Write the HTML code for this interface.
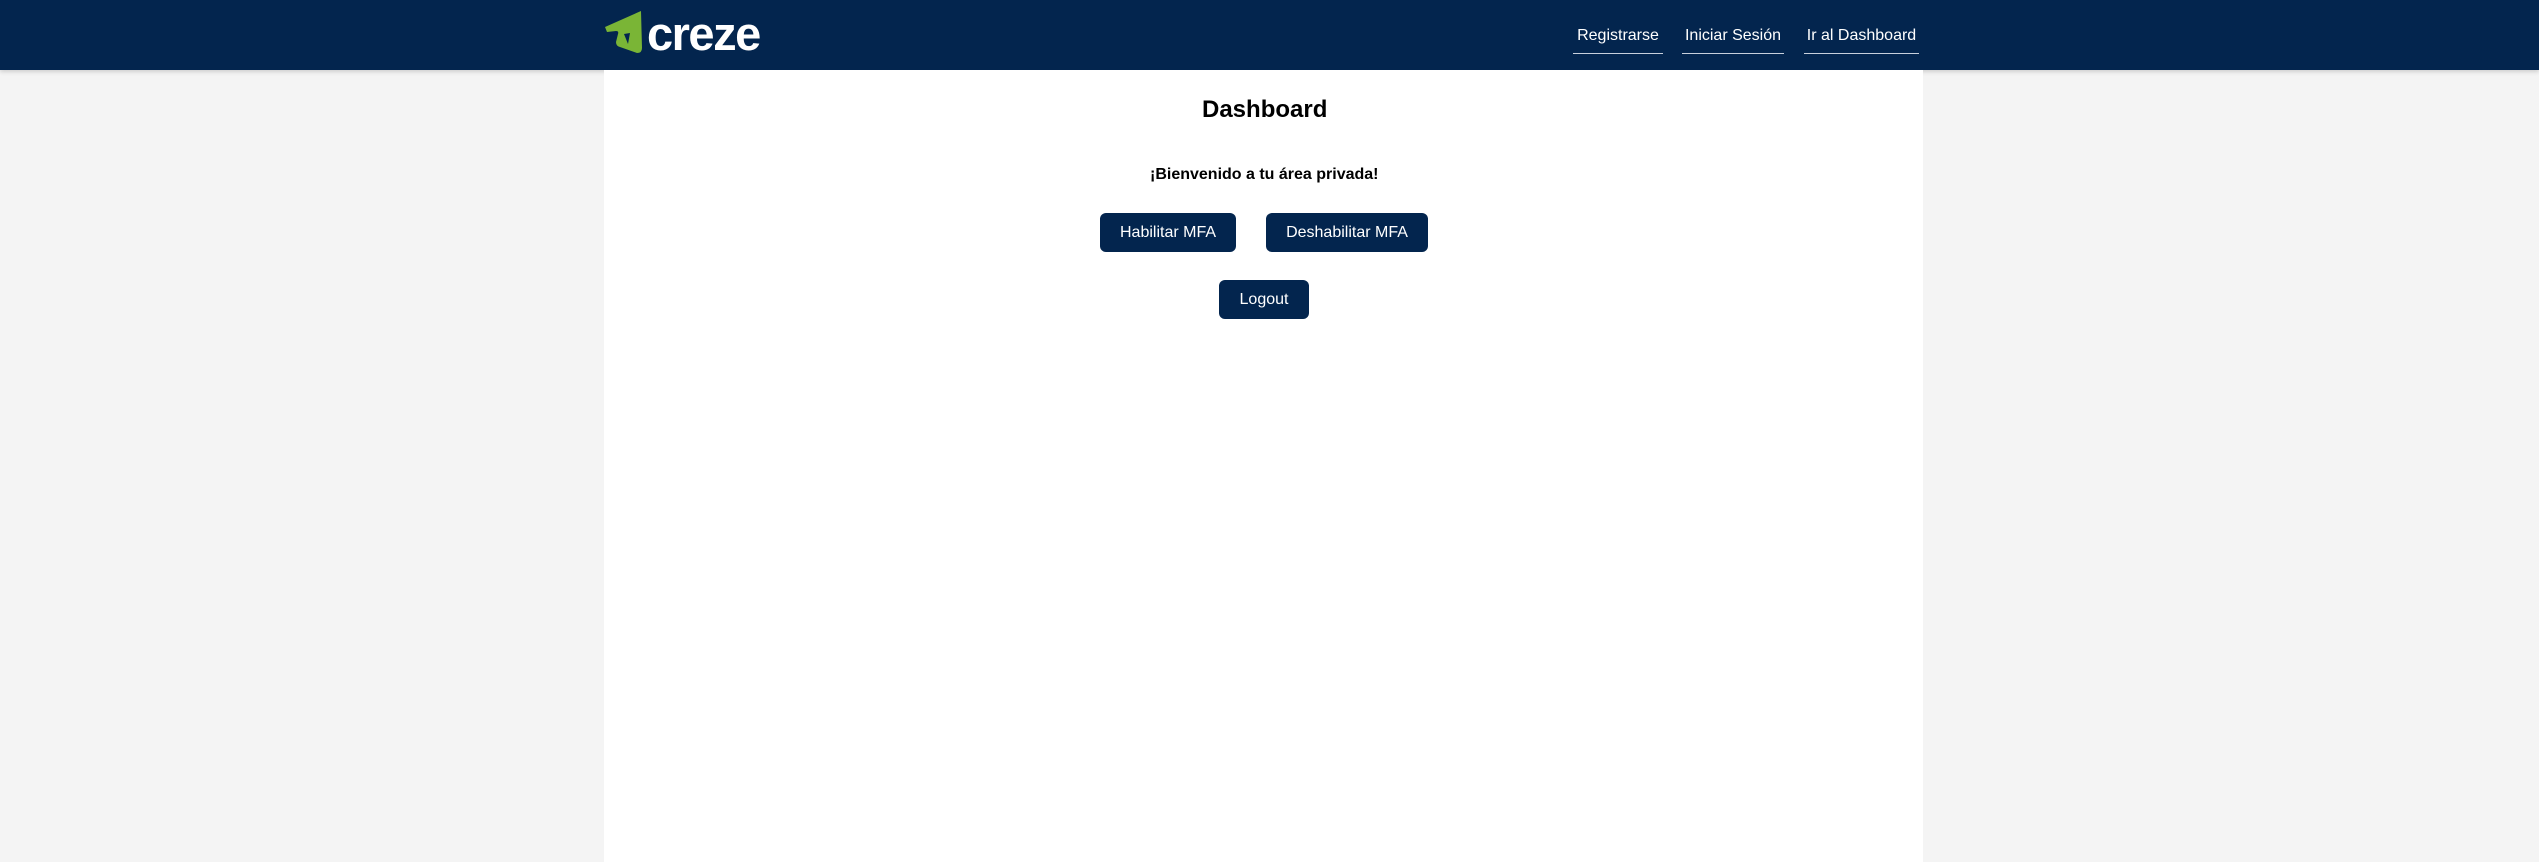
<!DOCTYPE html>
<html><head><meta charset="utf-8"><style>
*{margin:0;padding:0;box-sizing:border-box}
body{width:2539px;height:862px;background:#f4f4f4;font-family:"Liberation Sans",Arial,sans-serif;position:relative;overflow:hidden}
.hdr{position:absolute;left:0;top:0;width:2539px;height:70px;background:#03254e;box-shadow:0 2px 4px rgba(0,0,0,.15)}
.main{position:absolute;left:604px;top:70px;width:1319px;height:792px;background:#fff}
.logo{position:absolute;left:647px;top:6px;color:#fff;font-weight:bold;font-size:47px;letter-spacing:-1.5px}
.nav{position:absolute;top:27px;color:#fff;font-size:16px;padding:0 0 8px;border-bottom:1px solid #c8d0dc;text-align:center}
.t{position:absolute;font-weight:bold;color:#000;white-space:nowrap}
.b{position:absolute;background:#03254e;color:#fff;font-size:16px;border-radius:6px;display:flex;align-items:center;justify-content:center}
</style></head><body>
<div class="hdr">
<svg style="position:absolute;left:0;top:0" width="700" height="70"><path d="M641 11 L605 27 L607 32 L616 31 Q619 31 618 34 L616 42 Q616 46 620 47 L637 53 Q642 53 642 48 Z M624 34 L630 33 L628 44 Z" fill="#7ab536" fill-rule="evenodd"/></svg>
<div class="logo">creze</div>
<div class="nav" style="left:1573px;width:90px">Registrarse</div>
<div class="nav" style="left:1682px;width:102px">Iniciar Sesión</div>
<div class="nav" style="left:1804px;width:115px">Ir al Dashboard</div>
</div>
<div class="main"></div>
<div class="t" style="left:1202px;top:96px;font-size:24px">Dashboard</div>
<div class="t" style="left:1150px;top:166px;font-size:16px">¡Bienvenido a tu área privada!</div>
<div class="b" style="left:1100px;top:213px;width:136px;height:39px">Habilitar MFA</div>
<div class="b" style="left:1266px;top:213px;width:162px;height:39px">Deshabilitar MFA</div>
<div class="b" style="left:1219px;top:280px;width:90px;height:39px">Logout</div>
</body></html>
